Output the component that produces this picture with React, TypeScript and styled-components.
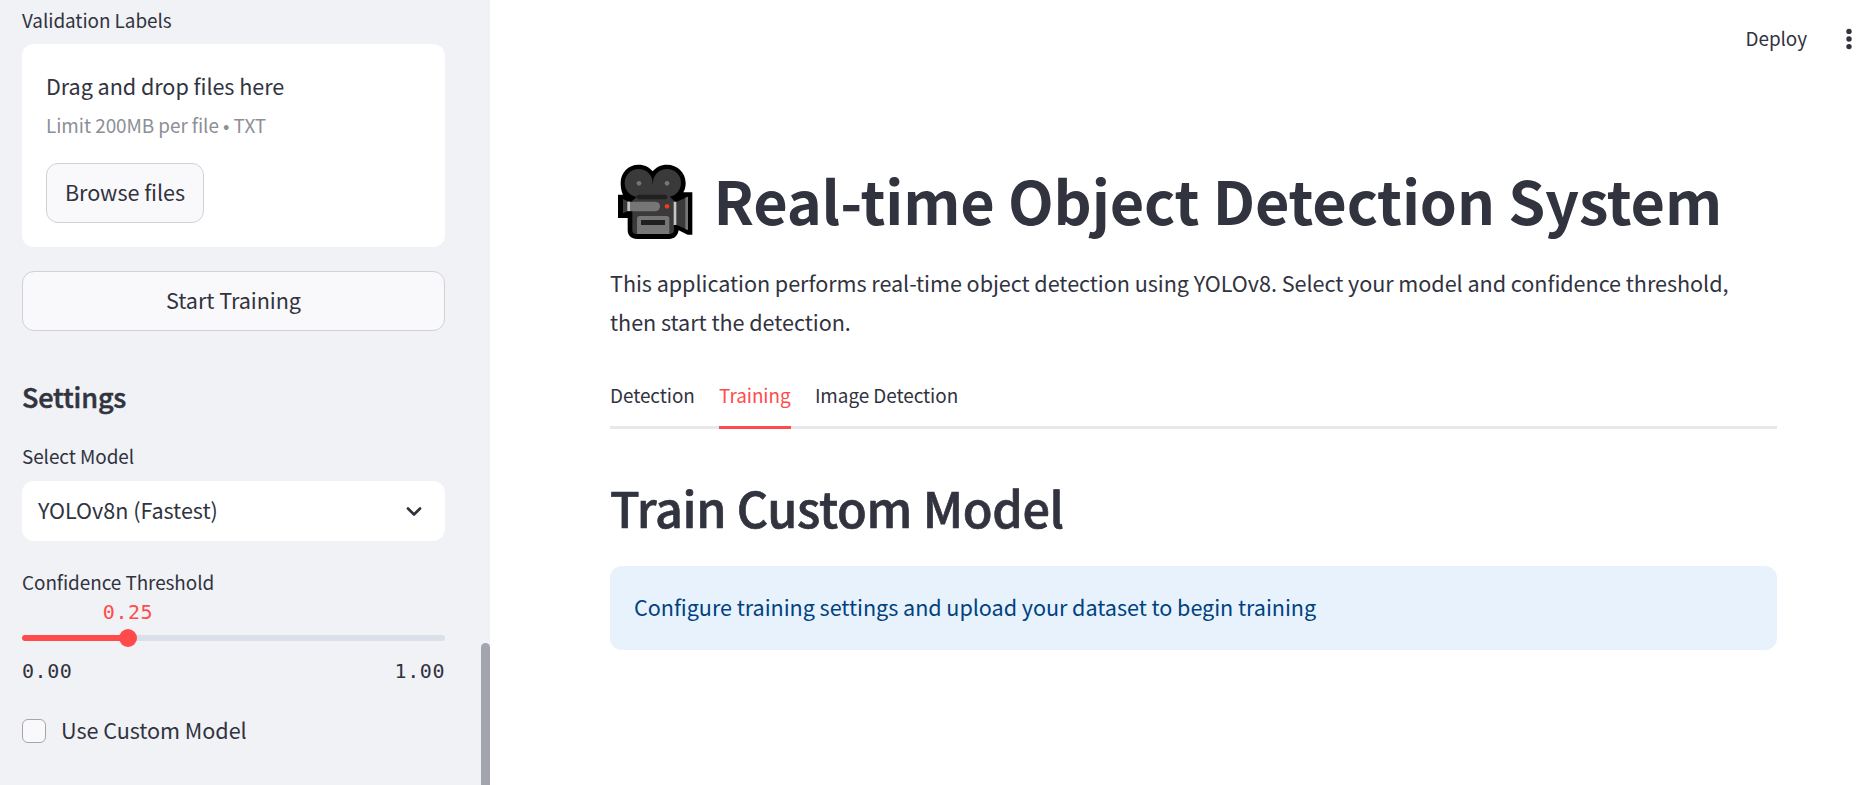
import React from 'react';
import styled, { createGlobalStyle } from 'styled-components';

const ink = '#31333f';
const red = '#ff4b4b';

const GlobalStyle = createGlobalStyle`
  * { box-sizing: border-box; }
  body {
    margin: 0;
    overflow: hidden;
    background: #fff;
    color: ${ink};
    font-family: "Noto Sans CJK JP", "Noto Sans", sans-serif;
    font-size: 21.6px;
    letter-spacing: -0.05px;
  }
  button { font: inherit; letter-spacing: inherit; color: inherit; }
`;

const Page = styled.div`
  display: flex;
  height: 785px;
`;

const Sidebar = styled.aside`
  position: relative;
  width: 490px;
  flex: none;
  padding: 0 45px 0 22px;
  background: #f0f2f6;
`;

const ScrollThumb = styled.div`
  position: absolute;
  right: 0;
  bottom: -5px;
  width: 9px;
  height: 147px;
  border-radius: 5px;
  background: #a3a5ae;
`;

const Label = styled.div<{ $height: number }>`
  height: ${(p) => p.$height}px;
  line-height: 32px;
  font-size: 18.9px;
`;

const FirstLabel = styled(Label)`
  line-height: 40px;
`;

const Dropzone = styled.section`
  height: 203px;
  padding: 24px;
  border-radius: 12px;
  background: #fff;
`;

const DropTitle = styled.div`
  height: 39px;
  line-height: 35px;
`;

const DropHint = styled.div`
  height: 56px;
  line-height: 36px;
  font-size: 18.9px;
  color: #8d8f97;
`;

const Button = styled.button<{ $wide?: boolean }>`
  display: flex;
  align-items: center;
  justify-content: center;
  width: ${(p) => (p.$wide ? '100%' : '158px')};
  height: 60px;
  padding: 0 0 4px;
  border: 1px solid #d0d1d6;
  border-radius: 12px;
  background: #f9f9fb;
`;

const TrainRow = styled.div`
  padding: 24px 0 48px;
`;

const SidebarHeading = styled.h2`
  height: 61px;
  margin: 0;
  font-size: 27px;
  font-weight: 500;
  line-height: 36px;
  letter-spacing: -0.15px;
  -webkit-text-stroke: 0.5px ${ink};
`;

const Select = styled.div`
  display: flex;
  align-items: center;
  justify-content: space-between;
  height: 60px;
  margin-bottom: 25px;
  padding: 0 20px 0 16px;
  border-radius: 12px;
  background: #fff;
`;

const SelectText = styled.span`
  padding-bottom: 4px;
`;

const SliderValue = styled.div`
  display: flex;
  justify-content: center;
  width: 212px;
  height: 25px;
  padding-top: 2px;
  font: 20px/24px "DejaVu Sans Mono", monospace;
  letter-spacing: 0.56px;
  color: ${red};
`;

const Track = styled.div`
  position: relative;
  height: 6px;
  margin: 12px 0 18px;
  border-radius: 3px;
  background: linear-gradient(to right, ${red} 25%, #dadfe9 25%);
`;

const Thumb = styled.div`
  position: absolute;
  left: 25%;
  top: 50%;
  width: 18px;
  height: 18px;
  border-radius: 50%;
  background: ${red};
  transform: translate(-50%, -50%);
`;

const Range = styled.div`
  display: flex;
  justify-content: space-between;
  height: 60px;
  font: 20px/24px "DejaVu Sans Mono", monospace;
  letter-spacing: 0.56px;
`;

const CheckRow = styled.label`
  display: flex;
  align-items: center;
  gap: 15px;
  height: 24px;
`;

const Box = styled.span`
  width: 24px;
  height: 24px;
  border: 1px solid #a5a6ad;
  border-radius: 6px;
  background: #f9f9fb;
`;

const CheckText = styled.span`
  padding-bottom: 4px;
`;

const Main = styled.main`
  flex: 1;
  padding: 0 94px 0 120px;
`;

const Header = styled.header`
  display: flex;
  align-items: center;
  justify-content: flex-end;
  gap: 38px;
  height: 78px;
  margin: 0 -76px 72px 0;
  font-size: 18.9px;
`;

const DeployText = styled.span`
  padding-bottom: 4px;
`;

const TitleRow = styled.div`
  display: flex;
  gap: 9.5px;
  height: 113px;
`;

const Title = styled.h1`
  margin: 0;
  padding-top: 9px;
  font-size: 59.4px;
  font-weight: 700;
  line-height: 80px;
  letter-spacing: -0.15px;
  white-space: nowrap;
`;

const Intro = styled.p`
  height: 116px;
  margin: 0;
  line-height: 39px;
`;

const Tabs = styled.nav`
  display: flex;
  gap: 23.7px;
  height: 50px;
  border-bottom: 3px solid #e8e8ea;
`;

const Tab = styled.div<{ $active?: boolean }>`
  height: 50px;
  padding-right: 0.6px;
  border-bottom: 3px solid ${(p) => (p.$active ? red : 'transparent')};
  color: ${(p) => (p.$active ? red : ink)};
  font-size: 18.9px;
  line-height: 32px;
`;

const SectionTitle = styled.h2`
  height: 91px;
  margin: 46px 0 0;
  font-size: 48.6px;
  font-weight: 500;
  line-height: 64px;
  letter-spacing: -0.35px;
  -webkit-text-stroke: 0.7px ${ink};
`;

const Alert = styled.div`
  display: flex;
  align-items: center;
  height: 84px;
  padding: 0 24px 4px;
  border-radius: 12px;
  background: #e8f2fc;
  color: #004280;
`;

function CameraIcon() {
  return (
    <svg width="94" height="100" viewBox="15 0 282 300" aria-hidden="true">
      <path
        d="M100 44 C119 44 134 52 143 64 C153 52 167 44 186 44 C217 44 242 68 242 99 C242 109 240 119 235 127 H262 V254 H248 L221 241 C218 258 207 267 193 267 H96 C79 267 68 256 68 240 V204 H39 V134 H54 C49 124 47 112 47 99 C47 68 70 44 100 44 Z"
        fill="#000"
      />
      <circle cx="101" cy="99" r="42" fill="#3a3a3a" />
      <circle cx="186" cy="99" r="42" fill="#3a3a3a" />
      <path d="M82 152 L98 138 H192 L207 152 V239 Q207 252 194 252 H94 Q82 252 82 239 Z" fill="#3a3a3a" />
      <path d="M143 100 L118 139 H168 Z" fill="#3a3a3a" />
      <rect x="95" y="134" width="92" height="14" rx="7" fill="#202020" />
      <path d="M54 147 L68 154 V184 L54 190 Z" fill="#3a3a3a" />
      <path d="M68 155 H151 Q165 156 165 169 Q165 182 151 184 H68 Z" fill="#767676" />
      <rect x="67" y="155" width="8" height="28" fill="#c6c6c6" />
      <path d="M213 156 L249 140 V240 L213 224 Z" fill="#3a3a3a" />
      <path d="M241 143 L249 140 V240 L241 237 Z" fill="#767676" />
      <rect x="206" y="155" width="8" height="70" fill="#c6c6c6" />
      <path d="M96 252 V206 Q96 198 104 198 H185 Q193 198 193 206 V252 Z" fill="#767676" />
      <rect x="108" y="210" width="72" height="15" fill="#202020" />
      <circle cx="102" cy="100" r="7" fill="#767676" />
      <circle cx="186" cy="100" r="7" fill="#767676" />
      <circle cx="186" cy="169" r="7" fill="#f03a17" />
    </svg>
  );
}

function ChevronIcon() {
  return (
    <svg width="22" height="22" viewBox="0 0 22 22" fill="none" aria-hidden="true">
      <path d="M5 8.5 L11 14.5 L17 8.5" stroke={ink} strokeWidth="2.7" strokeLinecap="round" strokeLinejoin="round" />
    </svg>
  );
}

function MenuIcon() {
  return (
    <svg width="8" height="22" viewBox="0 0 8 22" fill={ink} aria-hidden="true">
      <circle cx="4" cy="3.4" r="2.7" />
      <circle cx="4" cy="11" r="2.7" />
      <circle cx="4" cy="18.6" r="2.7" />
    </svg>
  );
}

export default function App() {
  return (
    <Page>
      <GlobalStyle />
      <Sidebar>
        <FirstLabel $height={44}>Validation Labels</FirstLabel>
        <Dropzone>
          <DropTitle>Drag and drop files here</DropTitle>
          <DropHint>Limit 200MB per file • TXT</DropHint>
          <Button>Browse files</Button>
        </Dropzone>
        <TrainRow>
          <Button $wide>Start Training</Button>
        </TrainRow>
        <SidebarHeading>Settings</SidebarHeading>
        <Label $height={41}>Select Model</Label>
        <Select>
          <SelectText>YOLOv8n (Fastest)</SelectText>
          <ChevronIcon />
        </Select>
        <Label $height={32}>Confidence Threshold</Label>
        <SliderValue>0.25</SliderValue>
        <Track>
          <Thumb />
        </Track>
        <Range>
          <span>0.00</span>
          <span>1.00</span>
        </Range>
        <CheckRow>
          <Box />
          <CheckText>Use Custom Model</CheckText>
        </CheckRow>
        <ScrollThumb />
      </Sidebar>
      <Main>
        <Header>
          <DeployText>Deploy</DeployText>
          <MenuIcon />
        </Header>
        <TitleRow>
          <CameraIcon />
          <Title>Real-time Object Detection System</Title>
        </TitleRow>
        <Intro>
          This application performs real-time object detection using YOLOv8. Select your model and confidence
          threshold, then start the detection.
        </Intro>
        <Tabs>
          <Tab>Detection</Tab>
          <Tab $active>Training</Tab>
          <Tab>Image Detection</Tab>
        </Tabs>
        <SectionTitle>Train Custom Model</SectionTitle>
        <Alert>Configure training settings and upload your dataset to begin training</Alert>
      </Main>
    </Page>
  );
}
